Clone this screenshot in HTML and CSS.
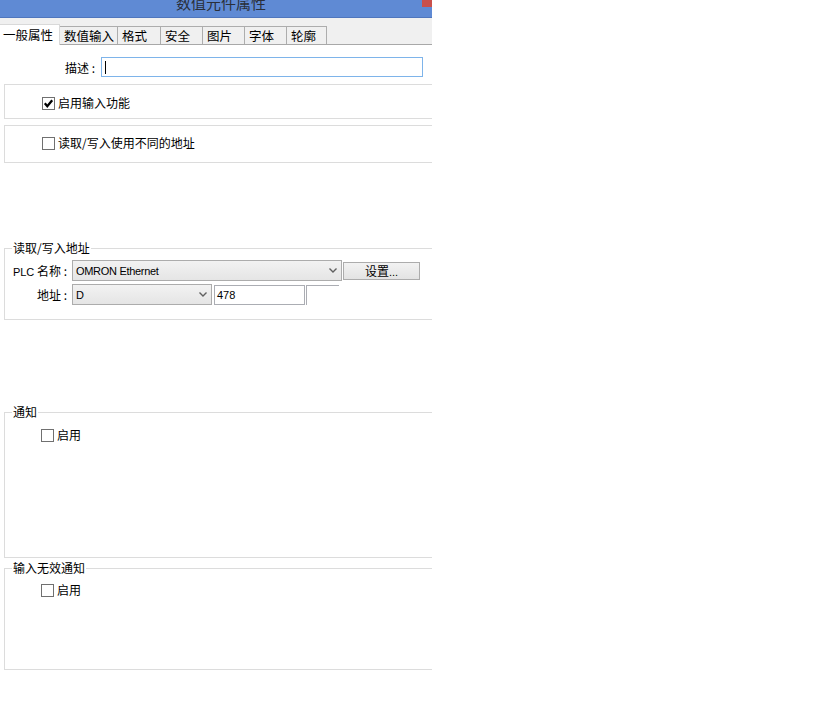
FILE: index.html
```html
<!DOCTYPE html>
<html lang="zh-CN">
<head>
    <meta charset="UTF-8">
    <title>数值元件属性</title>
    <link rel="stylesheet" href="styles.css">
</head>
<body>
    <div class="dialog">
        <div class="titlebar">
            <span class="title">数值元件属性</span>
            <span class="close"></span>
        </div>

        <div class="tabs">
            <div class="tab active" style="width: 60px">一般属性</div>
            <div class="tab" style="width: 58px">数值输入</div>
            <div class="tab" style="width: 43px">格式</div>
            <div class="tab" style="width: 42px">安全</div>
            <div class="tab" style="width: 42px">图片</div>
            <div class="tab" style="width: 42px">字体</div>
            <div class="tab" style="width: 40px">轮廓</div>
        </div>

        <div class="content">
            <div class="desc-row">
                <span class="desc-label">描述 :</span>
                <div class="text-input focus"><span class="caret"></span></div>
            </div>

            <div class="box box-first">
                <label class="check">
                    <span class="check-box">
                        <svg width="11" height="11" viewBox="0 0 11 11"><path d="M1.8 5.3 L4.3 8.2 L9.2 2.3" fill="none" stroke="#000" stroke-width="2.3"/></svg>
                    </span>
                    启用输入功能
                </label>
            </div>

            <div class="box box-second">
                <label class="check">
                    <span class="check-box"></span>
                    读取/写入使用不同的地址
                </label>
            </div>

            <fieldset class="group group-address">
                <legend>读取/写入地址</legend>
                <div class="form-row">
                    <span class="row-label"><span class="latin">PLC</span> 名称 :</span>
                    <div class="select select-plc">
                        <span class="latin narrow">OMRON Ethernet</span>
                        <svg class="arrow" width="8" height="5" viewBox="0 0 8 5"><path d="M0.5 0.5 L4 4 L7.5 0.5" fill="none" stroke="#606060" stroke-width="1.4"/></svg>
                    </div>
                    <div class="button">设置<span class="latin">...</span></div>
                </div>
                <div class="form-row row-second">
                    <span class="row-label">地址 :</span>
                    <div class="select select-device">
                        <span class="latin">D</span>
                        <svg class="arrow" width="8" height="5" viewBox="0 0 8 5"><path d="M0.5 0.5 L4 4 L7.5 0.5" fill="none" stroke="#606060" stroke-width="1.4"/></svg>
                    </div>
                    <div class="text-input addr-input"><span class="latin">478</span></div>
                    <div class="text-input addr-extra"></div>
                </div>
            </fieldset>

            <fieldset class="group group-notify">
                <legend>通知</legend>
                <label class="check">
                    <span class="check-box"></span>
                    启用
                </label>
            </fieldset>

            <fieldset class="group group-invalid">
                <legend>输入无效通知</legend>
                <label class="check">
                    <span class="check-box"></span>
                    启用
                </label>
            </fieldset>
        </div>
    </div>
</body>
</html>
```

FILE: styles.css
```css
* {
    box-sizing: border-box;
}

body {
    margin: 0;
    background-color: white;
    font-family: "Noto Sans CJK SC", "Liberation Sans", sans-serif;
    font-size: 12px;
    color: #000;
}

.latin {
    font-family: "Liberation Sans", "DejaVu Sans", sans-serif;
    font-size: 11px;
}

.latin.narrow {
    letter-spacing: -0.3px;
}

.dialog {
    width: 432px;
    overflow: hidden;
}

/* title bar */
.titlebar {
    height: 18px;
    background-color: #5f8ad4;
    border-bottom: 1px solid #4f76bd;
    display: flex;
    align-items: flex-start;
    padding-left: 20px;
    overflow: hidden;
}

.title {
    flex: 1;
    text-align: center;
    font-size: 15px;
    line-height: 6px;
    color: #2a2f3a;
}

.close {
    width: 10px;
    height: 7px;
    background-color: #c9504c;
}

/* tabs */
.tabs {
    height: 27px;
    background-color: #f0f0f0;
    border-bottom: 1px solid #a8a8a8;
    display: flex;
    align-items: flex-end;
}

.tab {
    height: 18px;
    border: 1px solid #adadad;
    border-bottom: none;
    border-left: none;
    background-color: #f0f0f0;
    font-size: 12.5px;
    line-height: 17px;
    padding-left: 4px;
    white-space: nowrap;
}

.tab.active {
    height: 21px;
    margin-bottom: -1px;
    background-color: white;
    border-color: #d9d9d9;
    line-height: 19px;
    padding-left: 3px;
}

/* content */
.content {
    padding-left: 4px;
}

.desc-row {
    display: flex;
    align-items: center;
    margin-top: 12px;
}

.desc-label {
    width: 91px;
    text-align: right;
    margin-right: 6px;
}

.text-input {
    height: 20px;
    border: 1px solid #abadb3;
    background-color: white;
    display: flex;
    align-items: center;
    padding-left: 3px;
}

.text-input.focus {
    width: 322px;
    border-color: #7eb4ea;
}

.caret {
    width: 1px;
    height: 13px;
    background-color: #000;
}

.box {
    width: 440px;
    border: 1px solid #dcdcdc;
    padding-left: 37px;
}

.box-first {
    margin-top: 7px;
    height: 35px;
    padding-top: 11px;
}

.box-second {
    margin-top: 6px;
    height: 38px;
    padding-top: 10px;
}

.check {
    display: flex;
    align-items: center;
    height: 14px;
    line-height: 14px;
}

.check-box {
    width: 13px;
    height: 13px;
    border: 1px solid #707070;
    background-color: white;
    margin-right: 3px;
    display: flex;
    align-items: center;
    justify-content: center;
}

/* group boxes */
.group {
    width: 440px;
    margin: 0;
    border: 1px solid #dcdcdc;
    padding: 0 0 0 8px;
}

.group legend {
    margin-left: -1px;
    padding: 0 1px;
    line-height: 14px;
    height: 14px;
}

.group .check {
    margin-left: 28px;
}

.group-address {
    margin-top: 78px;
    height: 79px;
    padding-top: 5px;
}

.form-row {
    display: flex;
    align-items: center;
}

.row-second {
    margin-top: 3px;
}

.row-label {
    width: 60px;
    flex-shrink: 0;
    text-align: right;
    padding-right: 5px;
    margin-left: -1px;
    white-space: nowrap;
}

.select {
    height: 21px;
    border: 1px solid #acacac;
    background: linear-gradient(#f2f2f2, #e5e5e5);
    display: flex;
    align-items: center;
    justify-content: space-between;
    padding: 0 4px 0 3px;
}

.select-plc {
    width: 270px;
}

.select-device {
    width: 140px;
}

.button {
    width: 77px;
    height: 18px;
    margin-left: 1px;
    border: 1px solid #acacac;
    background: linear-gradient(#f2f2f2, #e3e3e3);
    text-align: center;
    line-height: 16px;
}

.addr-input {
    width: 91px;
    margin-left: 2px;
    height: 20px;
    padding-left: 2px;
}

.addr-extra {
    width: 33px;
    margin-left: 1px;
    height: 20px;
    border-right: none;
    border-bottom: none;
}

.group-notify {
    margin-top: 85px;
    height: 153px;
    padding-top: 9px;
}

.group-invalid {
    margin-top: 3px;
    height: 109px;
    padding-top: 8px;
}
```
